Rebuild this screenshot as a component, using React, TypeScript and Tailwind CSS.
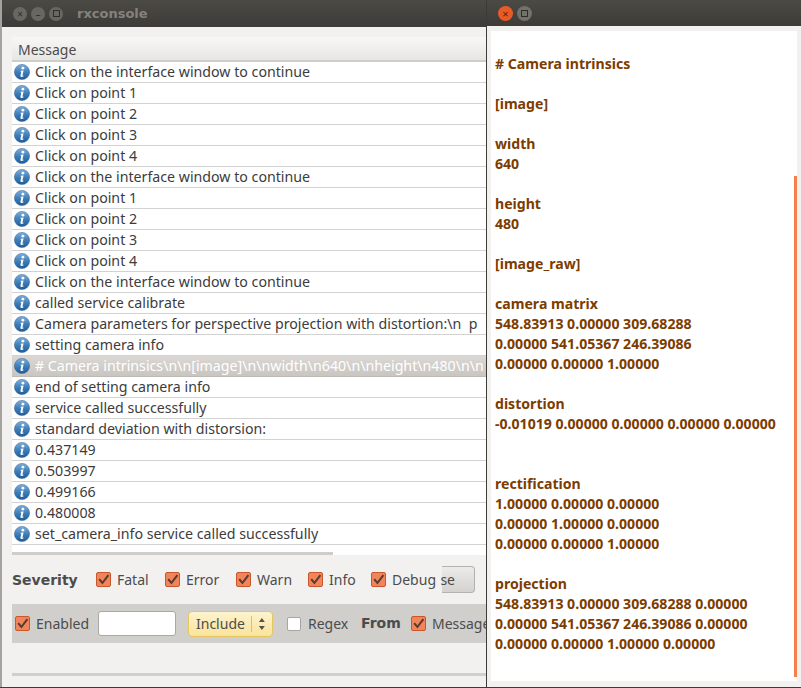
const messages = [
  "Click on the interface window to continue",
  "Click on point 1",
  "Click on point 2",
  "Click on point 3",
  "Click on point 4",
  "Click on the interface window to continue",
  "Click on point 1",
  "Click on point 2",
  "Click on point 3",
  "Click on point 4",
  "Click on the interface window to continue",
  "called service calibrate",
  "Camera parameters for perspective projection with distortion:\\n  p",
  "setting camera info",
  "# Camera intrinsics\\n\\n[image]\\n\\nwidth\\n640\\n\\nheight\\n480\\n\\n",
  "end of setting camera info",
  "service called successfully",
  "standard deviation with distorsion:",
  "0.437149",
  "0.503997",
  "0.499166",
  "0.480008",
  "set_camera_info service called successfully",
];

const intrinsics = `# Camera intrinsics

[image]

width
640

height
480

[image_raw]

camera matrix
548.83913 0.00000 309.68288
0.00000 541.05367 246.39086
0.00000 0.00000 1.00000

distortion
-0.01019 0.00000 0.00000 0.00000 0.00000


rectification
1.00000 0.00000 0.00000
0.00000 1.00000 0.00000
0.00000 0.00000 1.00000

projection
548.83913 0.00000 309.68288 0.00000
0.00000 541.05367 246.39086 0.00000
0.00000 0.00000 1.00000 0.00000`;

function InfoIcon({ id }: { id: number }) {
  return (
    <svg width="16" height="16" viewBox="0 0 16 16" className="shrink-0">
      <defs>
        <linearGradient id={`info-${id}`} x1="0" y1="0" x2="0" y2="1">
          <stop offset="0" stopColor="#7fb0dc" />
          <stop offset="0.5" stopColor="#3f7fba" />
          <stop offset="1" stopColor="#1f5c98" />
        </linearGradient>
      </defs>
      <circle cx="8" cy="8" r="7.6" fill={`url(#info-${id})`} stroke="#2a5f95" strokeWidth="0.5" />
      <circle cx="8.9" cy="4.2" r="1.4" fill="#fff" />
      <path d="M6.6 6.7 L9.6 6.4 L8.5 11.2 Q8.4 11.9 9.5 11.5 L9.4 12.4 Q8 13.1 6.9 12.8 Q6.2 12.5 6.5 11.4 L7.3 7.8 L6.5 7.6 Z" fill="#fff" />
    </svg>
  );
}

function Check({ on = true }: { on?: boolean }) {
  if (!on) {
    return <span className="block w-[14px] h-[14px] shrink-0 rounded-[2px] border border-[#a8a6a2] bg-white" />;
  }
  return (
    <span className="flex items-center justify-center w-[15px] h-[15px] shrink-0 rounded-[2px] border border-[#c9572c] bg-[#f0845a]">
      <svg width="13" height="13" viewBox="0 0 13 13">
        <path d="M2.2 6.2 L5.4 10 L11.4 2.2" fill="none" stroke="#5a3a2c" strokeWidth="2" />
      </svg>
    </span>
  );
}

function Labeled({ label, className }: { label: string; className: string }) {
  return (
    <div className={`flex items-center shrink-0 gap-[6px] ${className}`}>
      <Check />
      <span>{label}</span>
    </div>
  );
}

export default function App() {
  return (
    <div className="relative w-[801px] h-[688px] overflow-hidden bg-[#3c3b37] font-['Noto_Sans',sans-serif] text-[14px] text-[#4c4c4c]">
      {/* rxconsole window */}
      <div className="flex flex-col w-[487px] h-[687px] bg-[#f2f1f0] border-l-2 border-[#a5a39f]">
        <div className="flex items-center h-[27px] shrink-0 bg-gradient-to-b from-[#4b4a45] to-[#3c3b37]">
          <div className="flex items-center gap-[4px] ml-[11px]">
            <span className="flex items-center justify-center w-[14px] h-[14px] rounded-full bg-[#686762] text-[10px] leading-none text-[#2f2e2b]">×</span>
            <span className="flex items-center justify-center w-[14px] h-[14px] rounded-full bg-[#686762] text-[10px] leading-none text-[#2f2e2b]">–</span>
            <span className="flex items-center justify-center w-[14px] h-[14px] rounded-full bg-[#686762]">
              <span className="block w-[7px] h-[7px] border border-[#2f2e2b]" />
            </span>
          </div>
          <span className="ml-[14px] font-['DejaVu_Sans',sans-serif] font-bold text-[13px] text-[#85827c]">rxconsole</span>
        </div>

        <div className="ml-[10px] mt-[10px] bg-white">
          <div className="flex items-center h-[25px] pl-[6px] pt-[1px] bg-gradient-to-b from-[#f8f7f6] to-[#e8e6e3] border-b-2 border-[#cfcdca] text-[14px] text-[#4c4c4c]">
            Message
          </div>
          {messages.map((m, i) =>
            <div
              key={i}
              className={`flex items-center gap-[5px] h-[21px] pl-[2px] border-b whitespace-pre overflow-hidden text-[14.2px] ${i === 14 ? "bg-gradient-to-b from-[#dad7d4] to-[#c9c6c2] border-[#bdbab6] text-white" : "bg-white border-[#d2d2d2] text-[#3c3c3c]"}`}
            >
              <InfoIcon id={i} />
              <span className="-mt-[1px]">{m}</span>
            </div>
          )}
          <div className="h-[7px]" />
          <div className="h-[3px]">
            <div className="w-[321px] h-[3px] bg-[#cfcdca]" />
          </div>
        </div>

        <div className="flex items-center ml-[10px] mt-[11px] h-[27px]">
          <span className="w-[84px] pt-[1px] font-['DejaVu_Sans',sans-serif] font-bold text-[14px] text-[#4c4c4c]">Severity</span>
          <Labeled label="Fatal" className="w-[69px]" />
          <Labeled label="Error" className="w-[71px]" />
          <Labeled label="Warn" className="w-[72px]" />
          <Labeled label="Info" className="w-[63px]" />
          <Labeled label="Debug" className="w-[71px]" />
          <div className="flex items-center justify-end w-[33px] h-[27px] pr-[19px] rounded-r-[4px] border border-l-0 border-[#b4b2ae] bg-gradient-to-b from-[#ecebe9] to-[#d4d2cf] text-[14px]">
            se
          </div>
        </div>

        <div className="flex items-center ml-[10px] mt-[11px] h-[39px] pl-[3px] bg-[#d0cfcc] whitespace-nowrap overflow-hidden">
          <Labeled label="Enabled" className="w-[83px]" />
          <div className="shrink-0 w-[78px] h-[25px] rounded-[3px] border border-[#aaa8a4] bg-white" />
          <div className="flex items-center shrink-0 ml-[12px] w-[85px] h-[26px] rounded-[4px] border border-[#e6c660] bg-gradient-to-b from-[#fdf3cf] to-[#fbe39a] text-[#4c4c4c]">
            <span className="pl-[7px] w-[63px]">Include</span>
            <span className="h-[16px] border-l border-[#d9c07a]" />
            <svg width="20" height="16" viewBox="0 0 20 16">
              <path d="M10 2 L13 6 L7 6 Z M10 14 L13 10 L7 10 Z" fill="#55534f" />
            </svg>
          </div>
          <div className="flex items-center shrink-0 gap-[7px] ml-[14px] w-[74px]">
            <Check on={false} />
            <span>Regex</span>
          </div>
          <span className="shrink-0 w-[50px] font-['DejaVu_Sans',sans-serif] font-bold text-[14px]">From</span>
          <Labeled label="Message" className="" />
        </div>

        <div className="ml-[10px] mt-[30px] h-[3px] bg-[#d0cfcc]" />
      </div>

      {/* intrinsics window, floating over the console */}
      <div className="absolute left-[486px] top-0 flex flex-col w-[315px] h-[687px] bg-[#f2f1f0] border-l border-[#3c3b37]">
        <div className="flex items-center h-[26px] shrink-0 gap-[4px] pl-[11px] bg-gradient-to-b from-[#4b4a45] to-[#3c3b37]">
          <span className="flex items-center justify-center w-[15px] h-[15px] rounded-full bg-[#ea5a26] text-[11px] leading-none text-[#5a2410]">×</span>
          <span className="flex items-center justify-center w-[15px] h-[15px] rounded-full bg-[#72716c]">
            <span className="block w-[7px] h-[7px] border border-[#2f2e2b]" />
          </span>
        </div>
        <div className="relative ml-[4px] mr-[4px] mt-[5px] h-[650px] bg-white pl-[4px] pt-[23px]">
          <pre className="font-['Noto_Sans',sans-serif] font-bold text-[14.1px] leading-[20px] text-[#7d3c00]">{intrinsics}</pre>
          <div className="absolute right-0 top-[145px] w-[3px] h-[501px] bg-[#f5814a]" />
        </div>
      </div>
    </div>
  );
}
